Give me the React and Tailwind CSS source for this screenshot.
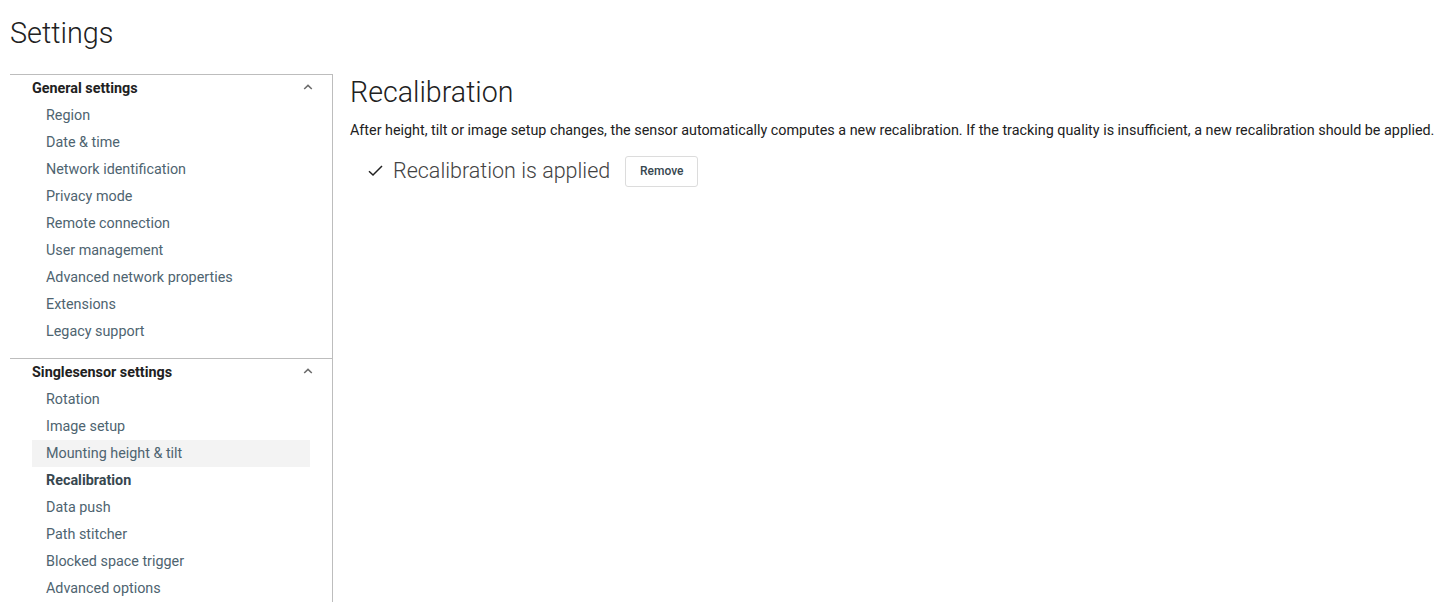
import React from "react";

const general = [
  "Region",
  "Date & time",
  "Network identification",
  "Privacy mode",
  "Remote connection",
  "User management",
  "Advanced network properties",
  "Extensions",
  "Legacy support",
];

const single = [
  "Rotation",
  "Image setup",
  "Mounting height & tilt",
  "Recalibration",
  "Data push",
  "Path stitcher",
  "Blocked space trigger",
  "Advanced options",
];

function Chevron() {
  return (
    <svg width="10" height="6" viewBox="0 0 10 6" className="mb-[4px] text-[#6b6b6b]">
      <path d="M1.2 5 L5 1.4 L8.8 5" fill="none" stroke="currentColor" strokeWidth="1.5" />
    </svg>
  );
}

function Section({ title, items, active, hover }) {
  return (
    <div className="border-t border-[#bdbdbd] pb-[13px]">
      <div className="flex h-[27px] items-center justify-between pl-[22px] pr-[19px]">
        <span className="text-[14.35px] font-bold text-[#212121]">{title}</span>
        <Chevron />
      </div>
      <ul className="mx-[22px]">
        {items.map((it) => (
          <li
            key={it}
            className={
              "flex h-[27px] items-center pl-[14px] text-[14.35px] " +
              (it === active
                ? "font-bold text-[#37474f]"
                : it === hover
                ? "bg-[#f3f3f3] text-[#4e6470]"
                : "text-[#4e6470]")
            }
          >
            {it}
          </li>
        ))}
      </ul>
    </div>
  );
}

export default function App() {
  return (
    <div
      className="h-[602px] overflow-hidden bg-white pl-[10px]"
      style={{ fontFamily: "Roboto, 'Liberation Sans', sans-serif" }}
    >
      <h1 className="flex h-[74px] items-start pt-[14px] text-[28.8px] font-light leading-[38px] text-[#212121]">
        Settings
      </h1>
      <div className="flex">
        <aside className="w-[323px] shrink-0 border-r border-[#bdbdbd]">
          <Section title="General settings" items={general} />
          <Section
            title="Singlesensor settings"
            items={single}
            active="Recalibration"
            hover="Mounting height & tilt"
          />
        </aside>
        <main className="pl-[17px]">
          <h2 className="mt-[2px] text-[28.6px] font-light leading-[32px] text-[#212121]">
            Recalibration
          </h2>
          <p className="mt-[13px] text-[14.35px] leading-[20px] text-[#212121]">
            After height, tilt or image setup changes, the sensor automatically computes a new
            recalibration. If the tracking quality is insufficient, a new recalibration should be
            applied.
          </p>
          <div className="mt-[14px] flex items-center pl-[18px]">
            <svg width="15" height="12" viewBox="0 0 15 12" className="text-[#212121]">
              <path d="M1 6.2 L5 10 L14 1" fill="none" stroke="currentColor" strokeWidth="1.5" />
            </svg>
            <span className="ml-[10px] text-[21.5px] font-light text-[#424242]">
              Recalibration is applied
            </span>
            <button className="ml-[15px] h-[31px] w-[73px] rounded-[3px] border border-[#dcdcdc] bg-white text-[12px] font-medium text-[#37474f]">
              Remove
            </button>
          </div>
        </main>
      </div>
    </div>
  );
}
